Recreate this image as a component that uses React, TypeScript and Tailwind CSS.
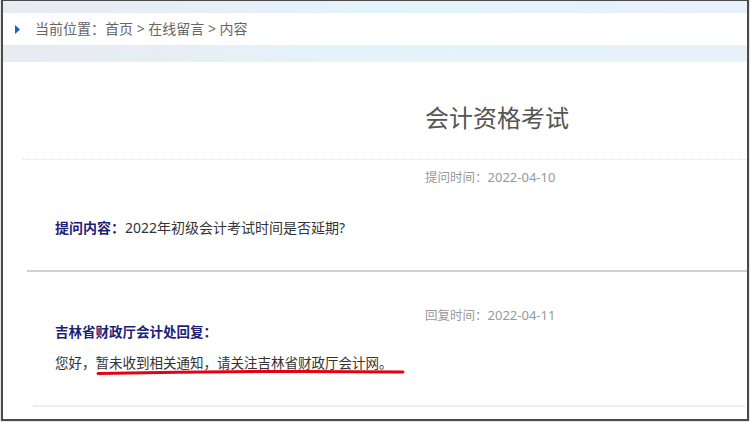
export default function App() {
  return (
    <div className="w-[750px] h-[422px] bg-[#e6e6e6] font-['Noto_Sans','Noto_Sans_CJK_SC',sans-serif] overflow-hidden">
      <div className="relative ml-px w-[748px] h-[421px] bg-white border-t border-l-2 border-r-2 border-b-2 border-[#4a4a4a] overflow-hidden">
        {/* top band */}
        <div className="h-[12px] bg-gradient-to-r from-[#e8ebf1] via-[#e4f3fb] to-[#e7f1f9]" />
        {/* breadcrumb */}
        <div className="h-[32px] flex items-center text-[14px] leading-[20px] text-[#666]">
          <svg width="5" height="9" viewBox="0 0 5 9" className="ml-[12px]">
            <path d="M0 0 L5 4.5 L0 9 Z" fill="#1f5bc6" />
          </svg>
          <span className="ml-[15px]">当前位置：首页 &gt; 在线留言 &gt; 内容</span>
        </div>
        <div className="h-[17px] bg-gradient-to-r from-[#e8ebf1] via-[#e4f3fb] to-[#e7f1f9]" />

        {/* title */}
        <div className="mt-[40px] pl-[422px] text-[24px] leading-[32px] text-[#555]">会计资格考试</div>
        <div className="mt-[25px] ml-[20px] border-t border-dotted border-[#e2e2e2]" />

        <div className="mt-[7px] pl-[422px] text-[12.5px] leading-[20px] text-[#999]">
          提问时间：<span className="text-[13px]">2022-04-10</span>
        </div>

        <div className="mt-[29px] pl-[52px] text-[14px] leading-[22px] text-[#333]">
          <span className="font-bold text-[#1c1f7a]">提问内容：</span>2022年初级会计考试时间是否延期?
        </div>

        <div className="mt-[31px] ml-[24px] h-[2px] bg-[#cfcfcf]" />

        <div className="mt-[33px] pl-[422px] text-[12.5px] leading-[20px] text-[#999]">
          回复时间：<span className="text-[13px]">2022-04-11</span>
        </div>
        <div className="-mt-[5px] pl-[52px] text-[13.5px] leading-[22px] font-bold text-[#1c1f7a]">
          吉林省财政厅会计处回复：
        </div>
        <div className="mt-[9px] pl-[52px] text-[13.5px] leading-[22px] text-[#333]">
          您好，暂未收到相关通知，请关注吉林省财政厅会计网。
        </div>

        <div className="mt-[31px] ml-[30px] mr-[2px] h-[2px] bg-[#eeeeee]" />

        {/* red hand-drawn underline */}
        <svg className="absolute left-0 top-0 pointer-events-none" width="748" height="421">
          <path d="M95 372.5 Q250 369.5 400 371" stroke="#e60012" strokeWidth="3" fill="none" strokeLinecap="round" />
        </svg>
      </div>
    </div>
  );
}
